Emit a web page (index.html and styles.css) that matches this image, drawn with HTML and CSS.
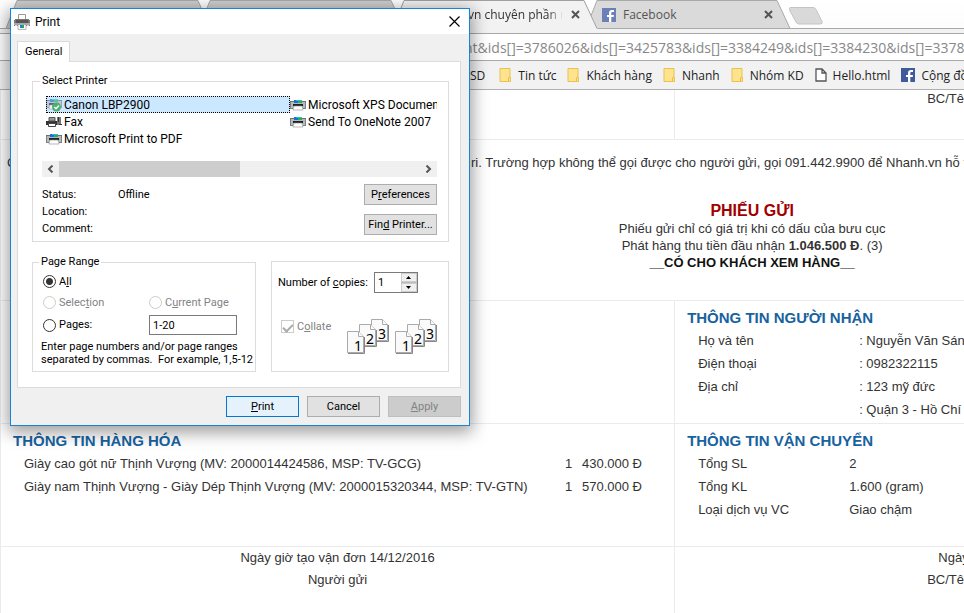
FILE: index.html
```html
<!DOCTYPE html>
<html lang="vi">
<head>
<meta charset="utf-8">
<title>Nhanh.vn</title>
<link rel="stylesheet" href="styles.css">
</head>
<body>
<svg class="defs" aria-hidden="true">
  <symbol id="printer" viewBox="0 0 16 12">
    <path fill="#6a7075" d="M0 2h16v1H0z"/>
    <path fill="#b4b9bc" d="M0 3h16v6H0z"/>
    <path fill="#7d8388" d="M0 3h1v7H0zM15 3h1v7h-1zM1 9h2v1H1zM13 9h2v1h-2z"/>
    <path fill="#1673d1" d="M4 1h4v3H4z"/><path fill="#27b7e0" d="M6 1h6v1H6z"/><path fill="#28b04a" d="M8 2h4v2H8z"/>
    <path fill="#222" d="M3 5h10v2H3z"/>
    <path fill="#fff" stroke="#888" stroke-width=".6" d="M4 7h8l1 4H3z"/>
  </symbol>
  <symbol id="folder" viewBox="0 0 13 14">
    <path fill="#ffe38f" stroke="#e8c34b" d="M1 .5h10v13H1z"/>
    <path fill="#ffe38f" stroke="#e8c34b" d="M9.500 9.500h2v4h-2z"/>
  </symbol>
  <symbol id="fb" viewBox="0 0 14 14">
    <path d="M0 0h14v14H0z"/>
    <path fill="#fff" d="M7 14V9H5V7h2V5.200C7 3 8 2 10 2h2v2h-1.500c-.8 0-1.200.4-1.200 1.200V7H12l-.3 2H9.300v5z"/>
  </symbol>
  <symbol id="sheets" viewBox="0 0 43 37">
    <g fill="#fafafa" stroke="#aaa">
      <path d="M25.500 1.500h11l5 5v16h-16z"/><path d="M36.500 1.500v5h5"/>
      <path d="M13.500 6.500h11l5 5v16h-16z"/><path d="M24.500 6.500v5h5"/>
      <path d="M1.500 13.500h11l5 5v16h-16z"/><path d="M12.500 13.500v5h5"/>
    </g>
    <path stroke="#888" fill="none" d="M2 35.500h16.500V19M19 28.500h11.500V12M31 23.500h11.500V7"/>
    <g class="sheet-num"><text x="8" y="33">1</text><text x="20" y="26">2</text><text x="32" y="21">3</text></g>
  </symbol>
</svg>

<header class="browser">
  <div class="tabs">
    <svg class="tab-shapes" width="830" height="29" aria-hidden="true">
      <g stroke="#a9a9a9">
        <path fill="#cfcfcf" d="M6 28.500L17 .5H198L210 28.500z"/>
        <path fill="#cfcfcf" d="M199 28.500L210 .5H391L404 28.500z"/>
        <path fill="#dadada" d="M586 28.500L597 .5H777L790 28.500z"/>
        <path fill="#d9d9d9" stroke="#c4c4c4" d="M790 7.500h23q2 0 3 2l6 12q1 2.500-2 2.500h-21q-2 0-3-2l-6-11q-1-3 0-3.500z"/>
      </g>
      <path fill="#f2f2f2" stroke="#f2f2f2" d="M393 29L404 1H584L597 29z"/>
      <path fill="none" stroke="#a0a0a0" d="M393 28.500L404 .5H584L597 28.500"/>
    </svg>
    <div class="tab tab-active"><span class="tab-title">vn chuyên phần m</span><button class="tab-close" aria-label="Close tab"><svg width="9" height="9"><path d="M1 1l7 7M8 1l-7 7"/></svg></button></div>
    <div class="tab tab-fb"><svg class="fb-dim" width="14" height="14"><use href="#fb"/></svg><span class="tab-title">Facebook</span><button class="tab-close" aria-label="Close tab"><svg width="9" height="9"><path d="M1 1l7 7M8 1l-7 7"/></svg></button></div>
  </div>
  <div class="toolbar"><input class="url" type="text" aria-label="Address" value="nt&amp;ids[]=3786026&amp;ids[]=3425783&amp;ids[]=3384249&amp;ids[]=3384230&amp;ids[]=3378410"></div>
  <nav class="bookmarks">
    <a href="#">SD</a>
    <a href="#"><svg width="13" height="14"><use href="#folder"/></svg>Tin tức</a>
    <a href="#"><svg width="13" height="14"><use href="#folder"/></svg>Khách hàng</a>
    <a href="#"><svg width="13" height="14"><use href="#folder"/></svg>Nhanh</a>
    <a href="#"><svg width="13" height="14"><use href="#folder"/></svg>Nhóm KD</a>
    <a href="#"><svg width="12" height="14"><path fill="#fff" stroke="#555" stroke-width="1.300" d="M1 1h6l4 4v8H1zM7 1v4h4"/></svg>Hello.html</a>
    <a href="#"><svg class="fb" width="14" height="14"><use href="#fb"/></svg>Cộng đồng</a>
  </nav>
</header>

<main class="doc">
  <div class="row row-top"><div class="cell"></div><div class="cell sign">BC/Tên bưu tá</div></div>
  <section class="notice">
    <p class="note"><span class="note-start">C</span><span>ri. Trường hợp không thể gọi được cho người gửi, gọi 091.442.9900 để Nhanh.vn hỗ trợ</span></p>
    <div class="slip">
      <h1>PHIẾU GỬI</h1>
      <p>Phiếu gửi chỉ có giá trị khi có dấu của bưu cục</p>
      <p>Phát hàng thu tiền đầu nhận <b>1.046.500 Đ</b>. (3)</p>
      <p class="view">__CÓ CHO KHÁCH XEM HÀNG__</p>
    </div>
  </section>
  <div class="row row-info">
    <div class="cell"></div>
    <div class="cell">
      <h2>THÔNG TIN NGƯỜI NHẬN</h2>
      <table class="pairs person">
        <tr><th>Họ và tên</th><td>: Nguyễn Văn Sáng</td></tr>
        <tr><th>Điện thoại</th><td>: 0982322115</td></tr>
        <tr><th>Địa chỉ</th><td>: 123 mỹ đức</td></tr>
        <tr><th></th><td>: Quận 3 - Hồ Chí Minh</td></tr>
      </table>
    </div>
  </div>
  <div class="row row-info">
    <div class="cell">
      <h2>THÔNG TIN HÀNG HÓA</h2>
      <table class="goods">
        <tr><td>Giày cao gót nữ Thịnh Vượng (MV: 2000014424586, MSP: TV-GCG)</td><td>1</td><td>430.000 Đ</td></tr>
        <tr><td>Giày nam Thịnh Vượng - Giày Dép Thịnh Vượng (MV: 2000015320344, MSP: TV-GTN)</td><td>1</td><td>570.000 Đ</td></tr>
      </table>
    </div>
    <div class="cell">
      <h2>THÔNG TIN VẬN CHUYỂN</h2>
      <table class="pairs">
        <tr><th>Tổng SL</th><td>2</td></tr>
        <tr><th>Tổng KL</th><td>1.600 (gram)</td></tr>
        <tr><th>Loại dịch vụ VC</th><td>Giao chậm</td></tr>
      </table>
    </div>
  </div>
  <div class="row row-sign">
    <div class="cell signer"><p>Ngày giờ tạo vận đơn 14/12/2016</p><p>Người gửi</p></div>
    <div class="cell sign"><div class="sign-block"><p>Ngày nhận</p><p>BC/Tên bưu tá</p></div></div>
  </div>
</main>

<form class="dialog" role="dialog" aria-label="Print">
  <div class="titlebar">
    <svg width="16" height="16"><path fill="#fff" stroke="#999" d="M4.500.5h7v5h-7z"/><path fill="#777" d="M1 5h14v1h1v6H0V6h1z"/><path fill="#555" d="M2 6h12v3H2z"/><path fill="#a8a8a8" d="M0 9h16v2H0z"/><path fill="#ddd" d="M1 11h2v1H1zM13 11h2v1h-2z"/><path fill="#fff" stroke="#999" stroke-width=".7" d="M4 10.500h8v5H4z"/><path fill="#1d7fd6" d="M6 11h2v3H6z"/><path fill="#20a860" d="M8 11h2v3H8z"/></svg>
    <span>Print</span>
    <button type="button" class="close" aria-label="Close"><svg width="11" height="11"><path d="M.5.5l10 10M10.500.5l-10 10"/></svg></button>
  </div>
  <div class="body">
    <button type="button" class="general">General</button>
    <div class="panel">
      <fieldset class="printers">
        <legend>Select Printer</legend>
        <div class="list">
          <button type="button" class="printer selected"><svg width="16" height="14" viewBox="0 0 16 14"><g opacity=".65"><use href="#printer" width="16" height="12"/></g><circle cx="10.500" cy="9" r="4.500" fill="#4caf72"/><path fill="none" stroke="#fff" stroke-width="1.400" d="M8.300 9l1.700 1.700 3-3.200"/></svg>Canon LBP2900</button>
          <button type="button" class="printer"><svg width="16" height="12"><use href="#printer"/></svg>Microsoft XPS Document Writer</button>
          <button type="button" class="printer"><svg width="16" height="12"><path fill="#333" d="M0 5h12v4H0z"/><path fill="#999" stroke="#555" d="M3 1.500h6V5H3z"/><path fill="#fff" stroke="#444" d="M2.500 7.500h7v3h-7z"/><path fill="#777" d="M11 1h4v8h-4z"/><path fill="#333" d="M12 1h1v5h-1zM13 8h3v1h-3z"/></svg>Fax</button>
          <button type="button" class="printer"><svg width="16" height="12"><use href="#printer"/></svg>Send To OneNote 2007</button>
          <button type="button" class="printer"><svg width="16" height="12"><use href="#printer"/></svg>Microsoft Print to PDF</button>
        </div>
        <div class="scroll">
          <button type="button" aria-label="Scroll left"><svg width="7" height="8"><path d="M5.500.5L2 4l3.500 3.500"/></svg></button>
          <div class="track"><div class="thumb"></div></div>
          <button type="button" aria-label="Scroll right"><svg width="7" height="8"><path d="M1.500.5L5 4 1.500 7.500"/></svg></button>
        </div>
        <div class="details">
          <dl><dt>Status:</dt><dd>Offline</dd><dt>Location:</dt><dd></dd><dt>Comment:</dt><dd></dd></dl>
          <div class="side"><button type="button" class="btn">P<u>r</u>eferences</button><button type="button" class="btn">Fin<u>d</u> Printer...</button></div>
        </div>
      </fieldset>
      <div class="groups">
        <fieldset class="range">
          <legend>Page Range</legend>
          <div class="opts">
            <label class="opt"><input type="radio" name="range" checked>A<u>l</u>l</label><span></span>
            <label class="opt off"><input type="radio" name="range" disabled>Selec<u>t</u>ion</label>
            <label class="opt off"><input type="radio" name="range" disabled>C<u>u</u>rrent Page</label>
            <label class="opt"><input type="radio" name="range">Pa<u>g</u>es:</label>
            <input class="pages" type="text" aria-label="Pages" value="1-20">
          </div>
          <p class="hint">Enter page numbers and/or page ranges<br>separated by commas.&nbsp; For example, 1,5-12</p>
        </fieldset>
        <fieldset class="copies">
          <div class="count"><label for="copies">Number of <u>c</u>opies:</label>
            <div class="spin"><input id="copies" type="text" value="1"><div class="arrows"><button type="button" aria-label="More"><svg width="5" height="3"><path d="M0 3h5L2.500 0z"/></svg></button><button type="button" aria-label="Fewer"><svg width="5" height="3"><path d="M0 0h5L2.500 3z"/></svg></button></div></div>
          </div>
          <div class="collate"><label class="opt off"><input type="checkbox" checked disabled>C<u>o</u>llate</label><div class="sheets"><svg width="43" height="37"><use href="#sheets"/></svg><svg width="43" height="37"><use href="#sheets"/></svg></div></div>
        </fieldset>
      </div>
    </div>
    <div class="footer"><button type="button" class="btn primary"><u>P</u>rint</button><button type="button" class="btn">Cancel</button><button type="button" class="btn" disabled><u>A</u>pply</button></div>
  </div>
</form>
</body>
</html>
```
FILE: styles.css
```css
* { box-sizing: border-box; }
body { margin: 0; min-height: 100vh; overflow: hidden; background: #fff; color: #333; font: 13px/23px "Liberation Sans", sans-serif; }
button, input { font: inherit; color: inherit; margin: 0; padding: 0; }
button { border: 0; background: none; }
p, h1, h2, dl, dd { margin: 0; }
svg { display: block; flex: none; }
.defs { position: absolute; width: 0; height: 0; }

.browser { font-family: "Open Sans", "Noto Sans", sans-serif; font-size: 12px; background: #f2f2f2; border-bottom: 1px solid #b0b0b0; }
.tabs { position: relative; display: flex; height: 29px; padding-left: 468px; background: linear-gradient(#fff, #fcfcfc); border-bottom: 1px solid #a9a9a9; }
.tab-shapes { position: absolute; left: 0; top: 0; }
.tab { position: relative; display: flex; align-items: center; height: 29px; color: #333; white-space: nowrap; }
.tab-active { width: 134px; padding-right: 22px; }
.tab-active .tab-title { -webkit-mask-image: linear-gradient(90deg, #000 85%, transparent); mask-image: linear-gradient(90deg, #000 85%, transparent); }
.tab-fb { width: 188px; padding-right: 17px; gap: 7px; color: #555; }
.tab-title { flex: 1; overflow: hidden; }
.tab-close { margin-left: 8px; }
.tab-close path { stroke: #555; stroke-width: 2; }
.fb { fill: #3f5b9c; }
.fb-dim { fill: #6b7fb8; }
.toolbar { padding: 4px 0 0; }
.url { display: block; width: 100%; height: 28px; padding: 0 0 0 464px; border: 1px solid #a9a9a9; border-width: 1px 0; background: #fff; color: #888; font-size: 14px; }
.bookmarks { display: flex; gap: 11px; height: 28px; padding-left: 470px; align-items: center; white-space: nowrap; overflow: hidden; }
.bookmarks a { display: flex; flex: none; align-items: center; gap: 6px; color: #222; text-decoration: none; }
.bookmarks a:first-child { padding-right: 3px; }

.doc { border-left: 1px solid #ebebeb; overflow: hidden; white-space: nowrap; }
.row { display: grid; grid-template-columns: minmax(0, 699fr) minmax(0, 301fr); border-bottom: 1px solid #ebebeb; }
.cell + .cell { border-left: 1px solid #ebebeb; }
.row-top { height: 50px; line-height: 17px; }
.sign { padding-left: 252px; }
.notice { height: 161px; padding-top: 11px; border-bottom: 1px solid #ebebeb; }
.note { display: flex; padding-left: 6px; }
.note-start { flex: none; width: 464px; }
.slip { margin-top: 28px; padding-left: 56%; text-align: center; line-height: 17px; }
h1 { font-size: 16px; line-height: 18px; color: #a00000; }
.view { color: #111; font-weight: bold; }
.row-info { min-height: 123px; }
.row-info .cell { padding: 5px 12px 2px; }
h2 { font-size: 15px; line-height: 23px; color: #17629f; }
table { border-collapse: collapse; margin-left: 11px; }
th, td { padding: 0; font-weight: normal; text-align: left; }
.pairs th { min-width: 151px; }
.person th { min-width: 161px; }
.goods td:first-child { min-width: 541px; }
.goods td:nth-child(2) { min-width: 17px; }
.row-sign { border-bottom: 0; min-height: 67px; line-height: 22px; }
.signer { text-align: center; }
.sign-block { display: inline-block; text-align: center; }

.dialog { position: absolute; left: 10px; top: 8px; width: 460px; border: 1px solid #1883d7; background: #f0f0f0; color: #000; font: 11px/14px Roboto, sans-serif; box-shadow: 0 4px 16px 2px rgba(0, 0, 0, .4); }
.titlebar { display: flex; align-items: center; gap: 5px; height: 25px; padding: 0 9px 0 3px; background: #fff; font-size: 12px; }
.close { margin-left: auto; }
.close path { stroke: #000; stroke-width: 1.200; }
.body { padding: 7px 8px 8px 6px; }
.general { position: relative; display: block; height: 21px; margin-bottom: -1px; padding: 0 7px; border: 1px solid #d9d9d9; border-bottom: 0; background: #fff; }
.panel { padding: 12px 11px 15px 14px; border: 1px solid #dcdcdc; background: #fff; }
fieldset { min-width: 0; margin: 0; border: 1px solid #dcdcdc; }
legend { margin-left: -2px; padding: 0 2px; }
.printers { padding: 8px 11px 4px 9px; }
.list { display: grid; grid-template-columns: 244px 1fr; grid-auto-rows: 17px; padding-left: 4px; overflow: hidden; font-size: 12px; }
.printer { display: flex; align-items: center; gap: 2px; white-space: nowrap; width: 100%; min-width: 0; overflow: hidden; }
.selected { background: #cce8ff; outline: 1px dotted #000; outline-offset: -1px; }
.scroll { display: flex; height: 16px; margin-top: 14px; background: #f0f0f0; }
.scroll button { display: grid; place-items: center; width: 17px; }
.scroll path { fill: none; stroke: #555; stroke-width: 2; }
.track { flex: 1; }
.thumb { width: 50%; height: 100%; background: #cdcdcd; }
.details { display: flex; justify-content: space-between; margin-top: 7px; }
dl { display: grid; grid-template-columns: 76px 1fr; grid-auto-rows: 17px; line-height: 17px; margin-top: 2px; }
.side { display: grid; gap: 9px; align-content: start; }
.btn { width: 73px; height: 21px; border: 1px solid #adadad; background: #e1e1e1; }
.primary { border-color: #0078d7; background: #e5f1fb; }
.btn:disabled { border-color: #bfbfbf; background: #ccc; color: #838383; }
.groups { display: grid; grid-template-columns: 224fr 178fr; gap: 15px; margin-top: 13px; }
.range { padding: 4px 9px 5px 8px; }
.opts { display: grid; grid-template-columns: 106px 1fr; row-gap: 4px; align-items: center; padding-left: 2px; }
.opt { display: flex; align-items: center; height: 17px; white-space: pre; }
.opt input { display: grid; place-items: center; appearance: none; width: 13px; height: 13px; margin-right: 3px; border: 1px solid #333; background: #fff; }
.opt input[type=radio] { border-radius: 50%; }
.opt input[type=radio]:checked { background: radial-gradient(#333 0 3px, #fff 4px); }
.opt input:disabled { border-color: #ccc; }
.opt input[type=checkbox]::after { content: ""; width: 8px; height: 4px; border: solid #aaa; border-width: 0 0 2px 2px; rotate: -45deg; }
.off { color: #838383; }
.pages { width: 88px; height: 20px; padding: 0 3px; border: 1px solid #7a7a7a; }
.hint { margin-top: 5px; line-height: 13px; white-space: nowrap; }
.copies { margin-top: 6px; padding: 10px 11px 10px 6px; }
.count { display: flex; align-items: center; gap: 6px; }
.spin { display: flex; width: 44px; height: 21px; border: 1px solid #7a7a7a; }
.spin input { width: 26px; padding-left: 3px; border: 0; }
.arrows { display: grid; flex: 1; grid-template-rows: 1fr 1fr; gap: 1px; background: #bbb; }
.arrows button { display: grid; place-items: center; border: 1px solid #ccc; background: #f0f0f0; }
.collate { display: flex; justify-content: space-between; align-items: flex-start; margin-top: 25px; padding-left: 3px; }
.sheets { display: flex; gap: 5px; }
.sheet-num { font: 14px "Noto Sans", sans-serif; fill: #000; }
.footer { display: flex; justify-content: flex-end; gap: 8px; margin-top: 8px; }
```
